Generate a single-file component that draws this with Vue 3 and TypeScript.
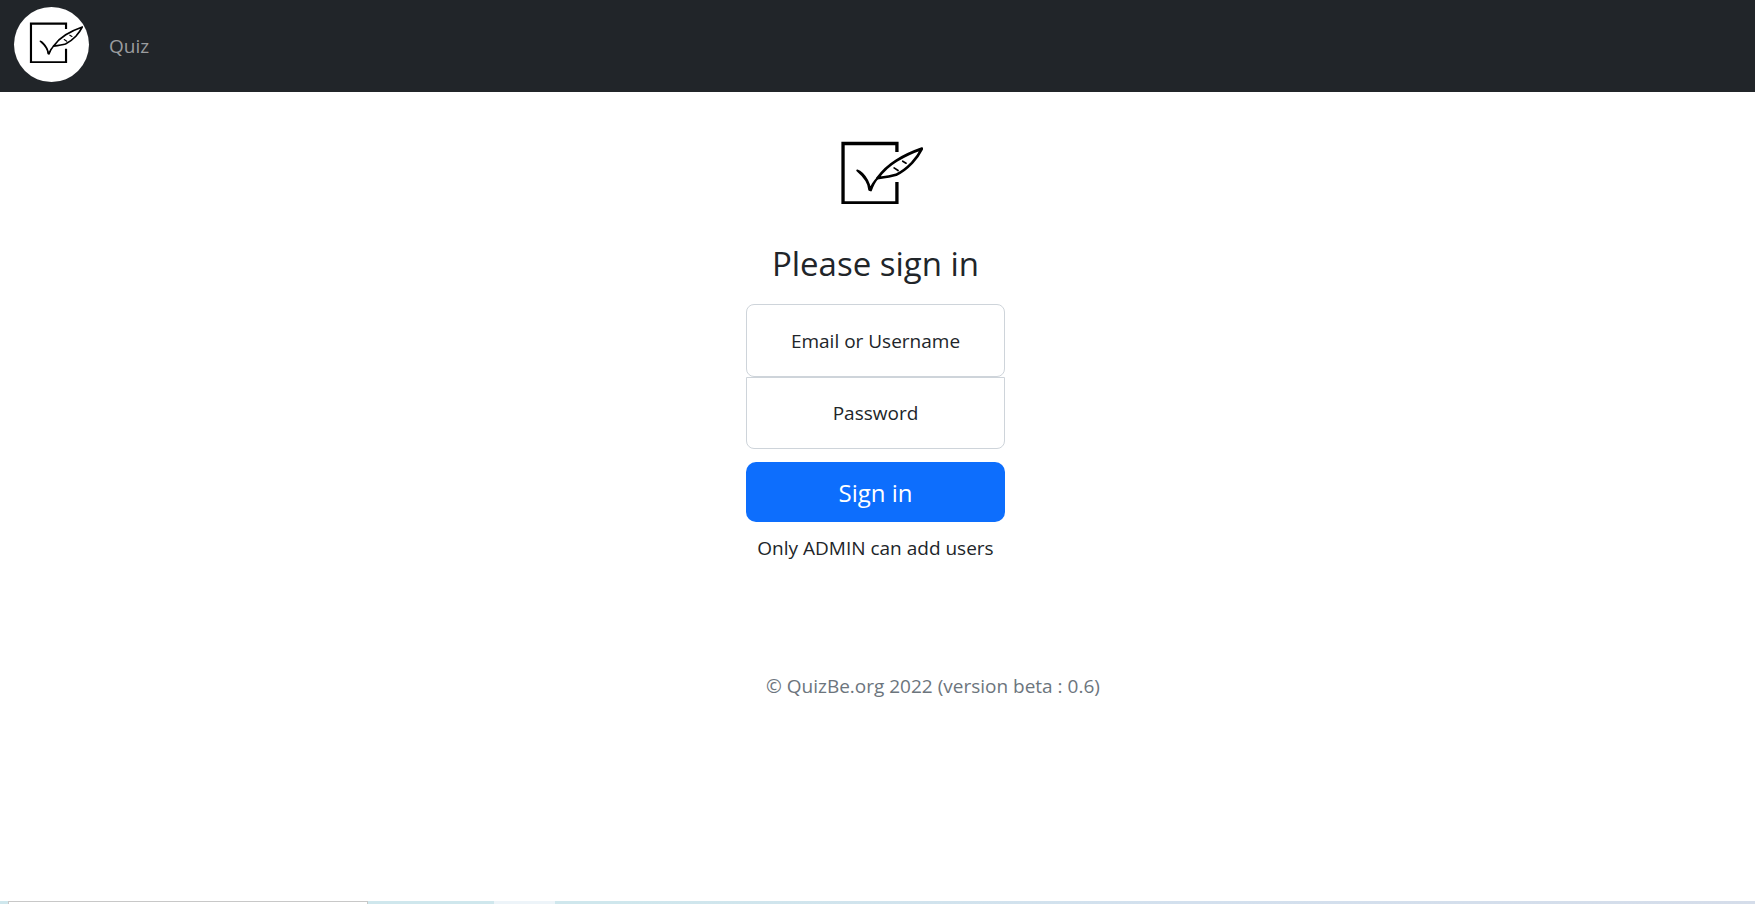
<script setup lang="ts">
import { ref } from 'vue'

const username = ref('')
const password = ref('')
</script>

<template>
  <div class="page">
    <svg class="defs" aria-hidden="true">
      <symbol id="quiz-logo" viewBox="0 0 250 190">
        <g fill="none" stroke="#000" stroke-linecap="butt">
          <path d="M231.5 65V39.5H69V218.500H231.5V156" stroke-width="10" transform="translate(-60 -32)" />
          <g transform="translate(-60 -32)" stroke-width="8" stroke-linecap="round" stroke-linejoin="round">
            <path d="M173 144Q196 112 230 91Q264 70 307 55Q297 76 277 98Q254 122 229 134Q213 139 173 144Z" />
            <path d="M223 113L235 121M249 93L259 99" stroke-width="5" />
            <path d="M112 121Q119 123 127 131Q145 149 151 178Q157 161 174 143Q162 156 153 181L148 179Q147 151 112 121Z" fill="#000" stroke-width="6" />
          </g>
        </g>
      </symbol>
    </svg>

    <nav class="navbar">
      <a class="brand" href="#" aria-label="QuizBe">
        <svg class="brand-mark" viewBox="0 0 250 190"><use href="#quiz-logo" /></svg>
      </a>
      <a class="nav-link" href="#">Quiz</a>
    </nav>

    <main class="signin">
      <form class="form" @submit.prevent>
        <svg class="logo" viewBox="0 0 250 190" aria-hidden="true"><use href="#quiz-logo" /></svg>
        <h1 class="title">Please sign in</h1>
        <div class="field">
          <input id="username" v-model="username" class="first" type="text" autocomplete="username" />
          <label for="username" :class="{ raised: username }">Email or Username</label>
        </div>
        <div class="field">
          <input id="password" v-model="password" class="last" type="password" autocomplete="current-password" />
          <label for="password" :class="{ raised: password }">Password</label>
        </div>
        <button class="submit" type="submit">Sign in</button>
        <p class="hint">Only ADMIN can add users</p>
        <p class="copyright">© QuizBe.org 2022 (version beta : 0.6)</p>
      </form>
    </main>

    <div class="strip">
      <div class="strip-panel"></div>
      <div class="strip-tab"></div>
    </div>
  </div>
</template>

<style>
body {
  margin: 0;
  background: #fff;
}
</style>

<style scoped>
* {
  box-sizing: border-box;
}

.page {
  display: flex;
  flex-direction: column;
  min-height: 100vh;
  color: #212529;
  font-family: "Segoe UI", "Open Sans", "Noto Sans", sans-serif;
  font-size: 19px;
  line-height: 30px;
}

.defs {
  position: absolute;
  width: 0;
  height: 0;
}

.navbar {
  display: flex;
  align-items: center;
  gap: 20px;
  height: 92px;
  padding: 0 14px 4px;
  background: #212529;
}

.brand {
  display: flex;
  align-items: center;
  justify-content: flex-end;
  width: 75px;
  height: 75px;
  padding: 0 6px 4px 0;
  border-radius: 50%;
  background: #fff;
  overflow: hidden;
}

.brand-mark {
  width: 54px;
  height: 41px;
}

.nav-link {
  padding-top: 4px;
  color: #9b9d9f;
  text-decoration: none;
}

.signin {
  flex: 1;
  padding: 49px 4px 0 0;
}

.form {
  display: flex;
  flex-direction: column;
  width: 259px;
  margin: 0 auto;
  text-align: center;
}

.logo {
  width: 83px;
  height: 63px;
  margin-left: 94px;
}

.title {
  margin: 39px 0 19px;
  font-size: 33px;
  font-weight: 400;
  line-height: 42px;
}

.field {
  position: relative;
}

.field input {
  display: block;
  width: 100%;
  height: 73px;
  padding: 28px 15px 8px;
  border: 1px solid #ced4da;
  background: #fff;
  color: #212529;
  font: inherit;
}

.field .first {
  border-radius: 8px;
}

.field .last {
  height: 72px;
  border-radius: 0 0 8px 8px;
}

.field label {
  position: absolute;
  inset: 0;
  display: flex;
  align-items: center;
  justify-content: center;
  pointer-events: none;
}

.field label.raised {
  align-items: flex-start;
  font-size: 14px;
}

.submit {
  height: 60px;
  margin-top: 13px;
  padding: 2px 16px 0;
  border: 0;
  border-radius: 10px;
  background: #0d6efd;
  color: #fff;
  font-family: inherit;
  font-size: 24px;
  line-height: 36px;
  cursor: pointer;
}

.hint {
  margin: 11px 0 0;
  white-space: nowrap;
}

.copyright {
  margin: 108px 0 0;
  padding-left: 20px;
  color: #6c757d;
  text-align: left;
  white-space: nowrap;
}

.strip {
  display: flex;
  height: 3px;
  padding-left: 8px;
  background: linear-gradient(90deg, #cfe7ed 0%, #cfe7ed 35%, #d3e0ee 68%, #d5ddea 100%);
}

.strip-panel {
  width: 360px;
  border: 1px solid #c8c8c8;
  border-bottom: 0;
  background: #fff;
}

.strip-tab {
  width: 61px;
  margin-left: 126px;
  background: #edf4f9;
}
</style>
